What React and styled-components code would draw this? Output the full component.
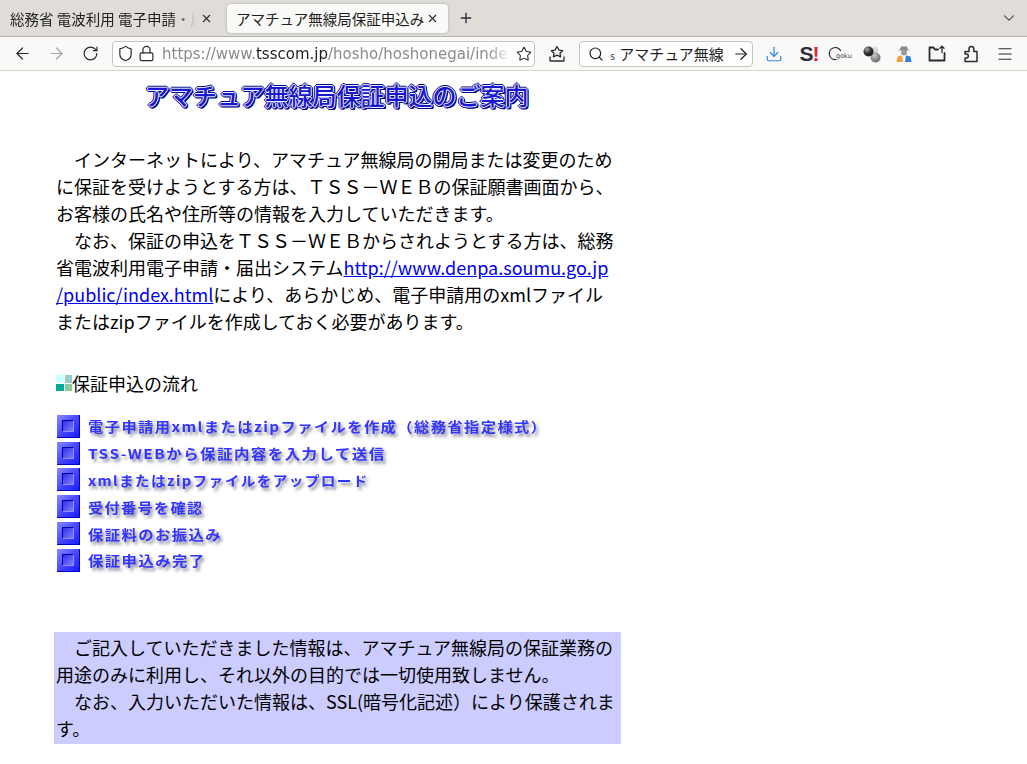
import styled, { createGlobalStyle } from 'styled-components';
import {
  ArrowLeft,
  ArrowRight,
  ChevronDown,
  Download,
  Lock,
  Menu,
  Plus,
  RotateCw,
  Search,
  Shield,
  Star,
  X,
} from 'lucide-react';

const GlobalStyle = createGlobalStyle`
  html, body {
    margin: 0;
    background: #fff;
  }
`;

const Window = styled.div`
  width: 1027px;
  height: 764px;
  overflow: hidden;
  background: #fff;
  font-family: 'Noto Sans CJK JP', 'Noto Sans', sans-serif;
  text-spacing-trim: space-all;
`;

const TabStrip = styled.div`
  height: 36px;
  background: #e0ddd8;
  border-bottom: 1px solid #b3b1ac;
  display: flex;
  align-items: center;
`;

const Tab = styled.div`
  width: ${(p) => p.$width}px;
  height: 29px;
  margin-left: ${(p) => p.$left}px;
  padding: 0 ${(p) => (p.$active ? 9 : 4)}px 0 ${(p) => (p.$active ? 9 : 10)}px;
  box-sizing: border-box;
  display: flex;
  align-items: center;
  border-radius: 4px;
  background: ${(p) => (p.$active ? '#f9f9f7' : 'transparent')};
  box-shadow: ${(p) => (p.$active ? '0 0 3px rgba(0, 0, 0, 0.25)' : 'none')};
  color: #1f1f22;
  font-size: 14.5px;
`;

const TabTitle = styled.span`
  flex: 1;
  min-width: 0;
  overflow: hidden;
  white-space: nowrap;
  -webkit-mask-image: ${(p) =>
    p.$faded ? 'linear-gradient(to right, #000 86%, transparent 98%)' : 'none'};
`;

const StripSpacer = styled.div`
  flex: 1;
`;

const StripButton = styled.div`
  width: 36px;
  height: 29px;
  display: flex;
  align-items: center;
  justify-content: center;
  color: #2b2a33;
`;

const Toolbar = styled.div`
  height: 33px;
  background: #f9f9f7;
  border-bottom: 1px solid #d4d2cd;
  padding-left: 5px;
  display: flex;
  align-items: center;
`;

const ToolButton = styled.div`
  width: ${(p) => p.$width || 34}px;
  height: 32px;
  flex: none;
  display: flex;
  align-items: center;
  justify-content: center;
  color: ${(p) => p.$color || '#2b2a33'};
`;

const UrlBar = styled.div`
  width: 423px;
  height: 26px;
  margin-left: 5px;
  padding-left: 4px;
  box-sizing: border-box;
  display: flex;
  align-items: center;
  gap: 4px;
  flex: none;
  overflow: hidden;
  background: #fff;
  border: 1px solid #c6c4bf;
  border-radius: 4px;
  color: #2b2a33;
`;

const UrlText = styled.div`
  flex: 1;
  min-width: 0;
  margin-left: 3px;
  overflow: hidden;
  white-space: nowrap;
  font-family: 'DejaVu Sans', sans-serif;
  font-size: 15px;
  color: #8a8a8f;
  -webkit-mask-image: linear-gradient(to right, #000 94%, transparent 100%);

  b {
    font-weight: 400;
    color: #1f1f22;
  }
`;

const SearchBar = styled.div`
  width: 174px;
  height: 26px;
  margin-right: 4px;
  padding: 0 2px 0 8px;
  box-sizing: border-box;
  flex: none;
  display: flex;
  align-items: center;
  background: #fff;
  border: 1px solid #c6c4bf;
  border-radius: 4px;
  color: #1f1f22;
  font-size: 15px;
  white-space: nowrap;
`;

const SearchText = styled.span`
  flex: 1;
  min-width: 0;
  margin: 0 1px 0 6px;
  overflow: hidden;

  small {
    font-size: 11px;
    margin-right: 4px;
    color: #55555a;
  }
`;

const BadgeS = styled.span`
  display: flex;
  align-items: center;
  font-family: 'Liberation Sans', sans-serif;
  font-size: 21px;
  font-weight: 700;
  letter-spacing: -1px;
  color: #2c2c3c;

  i {
    font-style: normal;
    color: #e0202c;
  }
`;

const Page = styled.main`
  width: 567px;
  margin-left: 54px;
  color: #000;
  font-size: 18px;
  line-height: 27px;
`;

const Title = styled.h1`
  margin: 0;
  padding: 11px 0 0 91px;
  height: 75px;
  box-sizing: border-box;
  font-size: 24px;
  line-height: 26px;
  font-weight: 500;
  white-space: nowrap;
  color: #1818d0;
  text-shadow: 1px 0 0 #eef, -1px 0 0 #eef, 0 1px 0 #eef, 0 -1px 0 #eef,
    1px 1px 0 #00008c, -1px 1px 0 #00008c, 1px -1px 0 #00008c, -1px -1px 0 #00008c,
    2px 0 0 #00008c, -2px 0 0 #00008c, 0 2px 0 #00008c, 0 -2px 0 #00008c,
    2px 1px 0 #00008c, 1px 2px 0 #00008c, 2px 2px 0 #00008c;
`;

const Copy = styled.p`
  margin: 0;
  padding: 0 2px;
  white-space: nowrap;

  a {
    color: #0000ee;
    text-decoration: underline;
  }
`;

const FlowHeading = styled.h2`
  margin: 35px 0 0;
  padding-left: 2px;
  display: flex;
  align-items: center;
  font-size: 18px;
  line-height: 27px;
  font-weight: 400;
`;

const Tiles = styled.span`
  width: 16px;
  height: 16px;
  margin-top: -1px;
  display: grid;
  gap: 1px;
  grid-template-columns: 1fr 1fr;
  grid-template-rows: 1fr 1fr;
`;

const Tile = styled.i`
  background: ${(p) => p.$color};
`;

const Steps = styled.ol`
  list-style: none;
  margin: 16px 0 0;
  padding: 0 0 0 3px;
  display: flex;
  flex-direction: column;
`;

const Step = styled.li`
  height: 26.8px;
  display: flex;
  align-items: center;
  gap: 8px;
`;

const Bullet = styled.span`
  width: 23px;
  height: 23px;
  flex: none;
  box-sizing: border-box;
  display: flex;
  align-items: center;
  justify-content: center;
  background: linear-gradient(135deg, #8a8aff 0%, #4444ff 55%, #1a1aff 100%);
  border-bottom: 1px solid #0000c8;
  border-right: 1px solid #0000c8;

  &::after {
    content: '';
    width: 12px;
    height: 12px;
    box-sizing: border-box;
    border-top: 1px solid #0000a8;
    border-left: 1px solid #0000a8;
    border-bottom: 1px solid #9090ff;
    border-right: 1px solid #9090ff;
    background: linear-gradient(135deg, #3030e8, #7c7cff);
  }
`;

const StepLabel = styled.span`
  display: inline-block;
  font-size: 13.4px;
  line-height: 18px;
  font-weight: 700;
  letter-spacing: 1.25px;
  white-space: nowrap;
  color: #3434ff;
  text-shadow: 2px 3px 3px rgba(50, 50, 90, 0.6);
  filter: blur(0.25px);
  transform: scaleX(${(p) => p.$stretch});
  transform-origin: left center;
`;

const Notice = styled.div`
  margin-top: 58px;
  padding: 2px;
  background: #ccccff;
  white-space: nowrap;
`;

const steps = [
  { label: '電子申請用xmlまたはzipファイルを作成（総務省指定様式）', stretch: 1.14 },
  { label: 'TSS-WEBから保証内容を入力して送信', stretch: 1.155 },
  { label: 'xmlまたはzipファイルをアップロード', stretch: 1.094 },
  { label: '受付番号を確認', stretch: 1.127 },
  { label: '保証料のお振込み', stretch: 1.145 },
  { label: '保証申込み完了', stretch: 1.147 },
];

const SaveIcon = () => (
  <svg width="18" height="18" viewBox="0 0 18 18" fill="none" stroke="currentColor" strokeWidth="1.3" strokeLinejoin="round">
    <path d="M9 1.5l2 3.6 3.6.6-2.6 2.6.6 3.5L9 10.2l-3.6 1.6.6-3.5-2.6-2.6 3.6-.6z" />
    <path d="M2 12v4h14v-4" strokeLinecap="round" />
  </svg>
);

const GokuIcon = () => (
  <svg width="26" height="16" viewBox="0 0 26 16" fill="none">
    <path d="M8 13.5A6 6 0 1 1 12.5 4.5" stroke="#2b2a33" strokeWidth="1.2" strokeLinecap="round" />
    <text x="8" y="12" fontSize="6.5" fontFamily="DejaVu Sans, sans-serif" fill="#444">goku</text>
  </svg>
);

const SpheresIcon = () => (
  <svg width="18" height="18" viewBox="0 0 18 18">
    <defs>
      <radialGradient id="ball-dark" cx="0.35" cy="0.3" r="0.8">
        <stop offset="0" stopColor="#aaa" />
        <stop offset="0.5" stopColor="#333" />
        <stop offset="1" stopColor="#111" />
      </radialGradient>
      <radialGradient id="ball-grey" cx="0.4" cy="0.3" r="0.8">
        <stop offset="0" stopColor="#ccc" />
        <stop offset="1" stopColor="#555" />
      </radialGradient>
    </defs>
    <circle cx="12" cy="5.5" r="3.5" fill="#d8d8d8" />
    <circle cx="12.5" cy="12.5" r="5" fill="url(#ball-grey)" />
    <circle cx="5.5" cy="6.5" r="5" fill="url(#ball-dark)" />
  </svg>
);

const AgentIcon = () => (
  <svg width="18" height="18" viewBox="0 0 18 18">
    <path d="M5 4.5l1-3h6l1 3 2 1H3z" fill="#8a8a8a" />
    <circle cx="9" cy="7.5" r="3" fill="#9a9a9a" />
    <path d="M1.5 17l1-5.5L7 10.5l1 6.5z" fill="#f0a040" />
    <path d="M16.5 17l-1-5.5-4.5-1-1 6.5z" fill="#2f80e0" />
  </svg>
);

const ShareBoxIcon = () => (
  <svg width="18" height="18" viewBox="0 0 18 18" fill="none" stroke="currentColor" strokeWidth="1.8" strokeLinejoin="round" strokeLinecap="round">
    <path d="M10 4.5H7L5.5 2.5H1.5v13h15V8" />
    <path d="M14 7.5V1.5M12 3.2L14 1.2l2 2" strokeWidth="1.3" />
  </svg>
);

const PuzzleIcon = () => (
  <svg width="18" height="18" viewBox="0 0 18 18" fill="none" stroke="currentColor" strokeWidth="1.5" strokeLinejoin="round">
    <path d="M3 6.5h4V4a2.4 2.4 0 0 1 4.8 0v2.5H15v10H3V13h1.3a2 2 0 0 0 0-4H3z" />
  </svg>
);

const App = () => (
  <Window>
    <GlobalStyle />
    <TabStrip>
      <Tab $width={217} $left={0}>
        <TabTitle $faded>総務省 電波利用 電子申請・届出システム</TabTitle>
        <X size={13} color="#2b2a33" />
      </Tab>
      <Tab $width={221} $left={10} $active>
        <TabTitle>アマチュア無線局保証申込み</TabTitle>
        <X size={13} color="#2b2a33" />
      </Tab>
      <StripButton>
        <Plus size={16} />
      </StripButton>
      <StripSpacer />
      <StripButton>
        <ChevronDown size={18} strokeWidth={1.4} />
      </StripButton>
    </TabStrip>
    <Toolbar>
      <ToolButton>
        <ArrowLeft size={19} strokeWidth={1.5} />
      </ToolButton>
      <ToolButton $color="#a5a5a8">
        <ArrowRight size={19} strokeWidth={1.5} />
      </ToolButton>
      <ToolButton>
        <RotateCw size={17} strokeWidth={1.7} />
      </ToolButton>
      <UrlBar>
        <Shield size={17} strokeWidth={1.7} />
        <Lock size={17} strokeWidth={1.7} />
        <UrlText>
          https://www.<b>tsscom.jp</b>/hosho/hoshonegai/index.html
        </UrlText>
        <ToolButton $width={20}>
          <Star size={16} strokeWidth={1.6} />
        </ToolButton>
      </UrlBar>
      <ToolButton $width={44}>
        <SaveIcon />
      </ToolButton>
      <SearchBar>
        <Search size={16} strokeWidth={1.8} />
        <SearchText>
          <small>s</small>アマチュア無線
        </SearchText>
        <ArrowRight size={18} strokeWidth={1.6} />
      </SearchBar>
      <ToolButton $color="#2f85f0">
        <Download size={18} strokeWidth={1.6} />
      </ToolButton>
      <ToolButton $width={36}>
        <BadgeS>
          S<i>!</i>
        </BadgeS>
      </ToolButton>
      <ToolButton $width={27}>
        <GokuIcon />
      </ToolButton>
      <ToolButton $width={36}>
        <SpheresIcon />
      </ToolButton>
      <ToolButton $width={28}>
        <AgentIcon />
      </ToolButton>
      <ToolButton $width={38}>
        <ShareBoxIcon />
      </ToolButton>
      <ToolButton $width={30}>
        <PuzzleIcon />
      </ToolButton>
      <ToolButton $width={38}>
        <Menu size={18} strokeWidth={1.5} />
      </ToolButton>
    </Toolbar>
    <Page>
      <Title>アマチュア無線局保証申込のご案内</Title>
      <Copy>
        {'\u3000'}インターネットにより、アマチュア無線局の開局または変更のため
        <br />
        に保証を受けようとする方は、ＴＳＳ－ＷＥＢの保証願書画面から、
        <br />
        お客様の氏名や住所等の情報を入力していただきます。
        <br />
        {'\u3000'}なお、保証の申込をＴＳＳ－ＷＥＢからされようとする方は、総務
        <br />
        省電波利用電子申請・届出システム<a href="#denpa">http://www.denpa.soumu.go.jp<br />/public/index.html</a>により、あらかじめ、電子申請用のxmlファイル
        <br />
        またはzipファイルを作成しておく必要があります。
      </Copy>
      <FlowHeading>
        <Tiles>
          <Tile $color="#ccffff" />
          <Tile $color="#99cccc" />
          <Tile $color="#00aa99" />
          <Tile $color="#88cc99" />
        </Tiles>
        保証申込の流れ
      </FlowHeading>
      <Steps>
        {steps.map((step) => (
          <Step key={step.label}>
            <Bullet />
            <StepLabel $stretch={step.stretch}>{step.label}</StepLabel>
          </Step>
        ))}
      </Steps>
      <Notice>
        {'\u3000'}ご記入していただきました情報は、アマチュア無線局の保証業務の
        <br />
        用途のみに利用し、それ以外の目的では一切使用致しません。
        <br />
        {'\u3000'}なお、入力いただいた情報は、SSL(暗号化記述）により保護されま
        <br />
        す。
      </Notice>
    </Page>
  </Window>
);

export default App;
